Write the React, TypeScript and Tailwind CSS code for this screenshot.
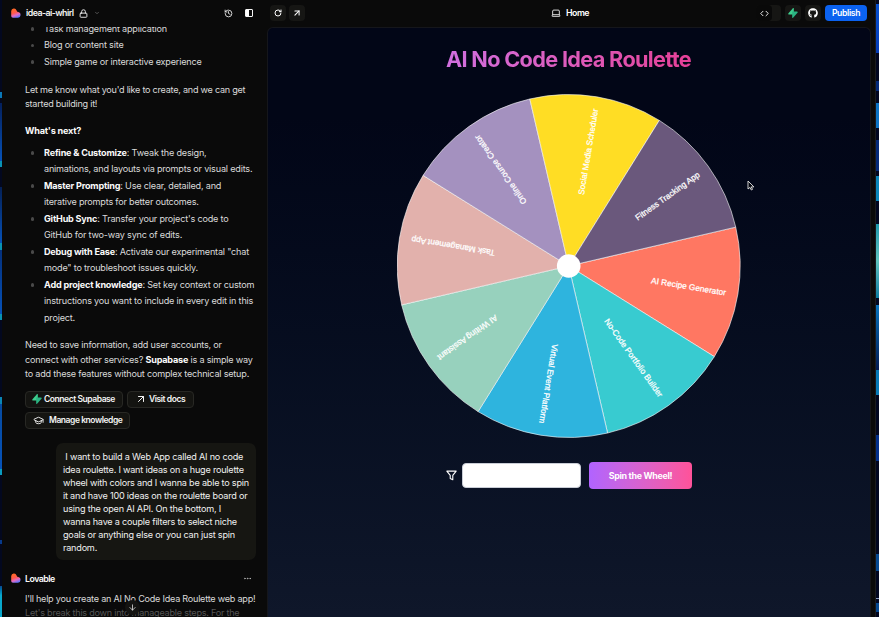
import { ReactNode } from "react";
import {
  ArrowDown,
  ArrowUpRight,
  ChevronDown,
  Code,
  Ellipsis,
  GraduationCap,
  History,
  Laptop,
  Lock,
  RotateCw,
} from "lucide-react";
import { FaGithub } from "react-icons/fa";

interface Slice {
  label: string;
  color: string;
}

interface ListItem {
  title?: string;
  lines: string[];
}

const slices: Slice[] = [
  { label: "AI Recipe Generator", color: "#ff7762" },
  { label: "No-Code Portfolio Builder", color: "#38cbd0" },
  { label: "Virtual Event Platform", color: "#2eb4de" },
  { label: "AI Writing Assistant", color: "#97d1bd" },
  { label: "Task Management App", color: "#e2b1ac" },
  { label: "Online Course Creator", color: "#a491bf" },
  { label: "Social Media Scheduler", color: "#ffdd24" },
  { label: "Fitness Tracking App", color: "#6a587c" },
];

const suggestions: ListItem[] = [
  { lines: ["Task management application"] },
  { lines: ["Blog or content site"] },
  { lines: ["Simple game or interactive experience"] },
];

const nextSteps: ListItem[] = [
  {
    title: "Refine & Customize",
    lines: [": Tweak the design,", "animations, and layouts via prompts or visual edits."],
  },
  {
    title: "Master Prompting",
    lines: [": Use clear, detailed, and", "iterative prompts for better outcomes."],
  },
  {
    title: "GitHub Sync",
    lines: [": Transfer your project's code to", "GitHub for two-way sync of edits."],
  },
  {
    title: "Debug with Ease",
    lines: [': Activate our experimental "chat', 'mode" to troubleshoot issues quickly.'],
  },
  {
    title: "Add project knowledge",
    lines: [
      ": Set key context or custom",
      "instructions you want to include in every edit in this",
      "project.",
    ],
  },
];

const prompt = [
  " I want to build a Web App called AI no code",
  "idea roulette. I want ideas on a huge roulette",
  "wheel with colors and I wanna be able to spin",
  "it and have 100 ideas on the roulette board or",
  "using the open AI API. On the bottom, I",
  "wanna have a couple filters to select niche",
  "goals or anything else or you can just spin",
  "random.",
];

const START = -13.1;
const STEP = 45;
const RADIUS = 171.5;

const point = (deg: number) => {
  const rad = (deg * Math.PI) / 180;
  return `${RADIUS * Math.cos(rad)} ${RADIUS * Math.sin(rad)}`;
};

const Wheel = () => (
  <svg className="h-[344px] w-[344px]" viewBox="-171.7 -172 344 344">
    {slices.map((s, i) => {
      const from = START + i * STEP;
      return (
        <path
          key={s.label}
          d={`M0 0L${point(from)}A${RADIUS} ${RADIUS} 0 0 1 ${point(from + STEP)}Z`}
          fill={s.color}
          stroke="#ffffff"
          strokeOpacity={0.6}
          strokeWidth={1}
        />
      );
    })}
    {slices.map((s, i) => (
      <text
        key={s.label}
        transform={`rotate(${START + (i + 0.5) * STEP})`}
        x={159.5}
        y={3.5}
        textAnchor="end"
        fill="#ffffff"
        className="font-['Liberation_Sans',sans-serif] text-[8.3px]"
        stroke="#ffffff"
        strokeWidth={0.25}
      >
        {s.label}
      </text>
    ))}
    <circle r={11.8} fill="#ffffff" />
  </svg>
);

const Logo = () => (
  <svg className="h-[10px] w-[10px]" viewBox="0 0 10 10">
    <defs>
      <linearGradient id="heart" x1="0.2" y1="0" x2="0.6" y2="1">
        <stop offset="0" stopColor="#ff6a1f" />
        <stop offset="0.45" stopColor="#ff5a4e" />
        <stop offset="0.7" stopColor="#e16bc4" />
        <stop offset="1" stopColor="#5b76ff" />
      </linearGradient>
    </defs>
    <path
      d="M0.2 3A2.8 2.8 0 0 1 5.6 2.4Q6 4 7.4 4.1A2.9 2.9 0 0 1 7 9.8H2Q0.2 9.6 0.2 8Z"
      fill="url(#heart)"
    />
  </svg>
);

const Bolt = ({ className }: { className: string }) => (
  <svg className={className} viewBox="0 0 12 12">
    <path d="M7 0.2V7.8H1.4Q-0.2 7.6 0.6 6.4L5.6 0.6Q6.6 -0.4 7 0.2Z" fill="#3ecf8e" />
    <path d="M5 11.8V4.2H10.6Q12.2 4.4 11.4 5.6L6.4 11.4Q5.4 12.4 5 11.8Z" fill="#2bb583" />
  </svg>
);

const Filter = ({ className }: { className: string }) => (
  <svg className={className} viewBox="0 0 12 12" fill="none">
    <path
      d="M0.9 1.2H11.1L7.4 5.9V10.6L4.6 9.2V5.9Z"
      stroke="#ffffff"
      strokeWidth={1.2}
      strokeLinejoin="round"
    />
  </svg>
);

const List = ({ items }: { items: ListItem[] }) => (
  <ul className="flex flex-col pl-[19px] leading-[16.5px] tracking-[-0.2px]">
    {items.map((item) => (
      <li key={item.lines[0]} className="relative">
        <span className="absolute -left-[13.5px] top-[6.5px] h-[3.5px] w-[3.5px] rounded-full bg-[#4a4a4a]" />
        {item.lines.map((line, i) => (
          <div key={line} className="whitespace-nowrap">
            {i === 0 && item.title && (
              <b className="font-bold text-[#fafafa]">{item.title}</b>
            )}
            {line}
          </div>
        ))}
      </li>
    ))}
  </ul>
);

const Chip = ({ children, className }: { children: ReactNode; className: string }) => (
  <button
    className={`flex h-[17px] items-center whitespace-nowrap rounded-[4px] border border-[#282824] bg-[#141411] text-[8.5px] font-semibold tracking-[-0.44px] text-[#f4f4f4] ${className}`}
  >
    {children}
  </button>
);

const Chat = () => (
  <aside className="relative flex w-[265px] shrink-0 flex-col overflow-hidden text-[9.1px] tracking-[-0.21px] text-[#dadada]">
    <header className="z-10 flex h-[27px] shrink-0 items-center bg-[#0a0a0a] pb-[1px] pl-[9px] text-[#f5f5f5]">
      <Logo />
      <span className="ml-[5px] w-[53px] whitespace-nowrap text-[8.8px] font-semibold tracking-[-0.55px]">
        idea-ai-whirl
      </span>
      <Lock className="h-[9px] w-[9px]" strokeWidth={2.4} />
      <ChevronDown className="ml-[6px] h-[6px] w-[6px] text-[#999]" />
      <History className="ml-[124px] h-[9px] w-[9px]" strokeWidth={2.2} />
      <span className="ml-[12px] h-[8px] w-[8px] rounded-[1px] border border-[#f5f5f5] bg-linear-to-r from-white from-45% to-transparent to-45%" />
    </header>
    <div className="-mt-[6.5px] flex flex-col pl-[23px]">
      <List items={suggestions} />
      <p className="mt-[12.5px] whitespace-nowrap leading-[14.6px] tracking-[-0.25px]">
        Let me know what you'd like to create, and we can get
        <br />
        started building it!
      </p>
      <h4 className="mt-[12px] text-[9.1px] font-bold leading-[14.6px] text-[#fafafa]">
        What's next?
      </h4>
      <div className="mt-[6.3px]">
        <List items={nextSteps} />
      </div>
      <p className="mt-[12px] whitespace-nowrap leading-[14.7px]">
        Need to save information, add user accounts, or
        <br />
        connect with other services?{" "}
        <b className="font-bold text-[#fafafa]">Supabase</b> is a simple way
        <br />
        to add these features without complex technical setup.
      </p>
      <div className="mt-[8.7px] flex flex-wrap gap-x-[4px] gap-y-[4px]">
        <Chip className="w-[98px] gap-[2px] pl-[6px]">
          <Bolt className="h-[10px] w-[10px]" />
          Connect Supabase
        </Chip>
        <Chip className="w-[67px] gap-[2px] pl-[7px]">
          <ArrowUpRight className="h-[12px] w-[12px]" />
          Visit docs
        </Chip>
        <Chip className="w-[105px] gap-[5px] pl-[7px]">
          <GraduationCap className="h-[11px] w-[11px]" />
          Manage knowledge
        </Chip>
      </div>
      <div className="ml-[31px] mt-[14.5px] h-[117px] w-[200px] whitespace-pre rounded-[7px] bg-[#161612] pl-[7px] pt-[7px] leading-[13px] text-[#f0f0f0]">
        {prompt.map((line) => (
          <div key={line}>{line}</div>
        ))}
      </div>
    </div>
    <div className="mt-[12px] flex h-[12px] items-center pl-[9px] text-[#fafafa]">
      <Logo />
      <span className="ml-[4px] text-[8.8px] font-semibold tracking-[-0.5px]">
        Lovable
      </span>
      <Ellipsis className="ml-auto mr-[15px] h-[9px] w-[9px] text-[#bbb]" />
    </div>
    <p className="mt-[7.5px] whitespace-nowrap pl-[23px] leading-[14.6px] tracking-[-0.24px]">
      I'll help you create an AI No Code Idea Roulette web app!
      <br />
      <span className="text-[#555]">
        Let's break this down into manageable steps. For the
      </span>
    </p>
    <button className="absolute bottom-[2px] left-[123px] flex h-[15px] w-[15px] items-center justify-center rounded-full bg-[#141412] text-[#eee]">
      <ArrowDown className="h-[9px] w-[9px]" />
    </button>
  </aside>
);

const IconButton = ({ children }: { children: ReactNode }) => (
  <button className="flex h-[16px] w-[16px] items-center justify-center rounded-[4px] bg-[#161614] text-white">
    {children}
  </button>
);

const Preview = () => (
  <main className="flex min-w-0 flex-1 flex-col">
    <header className="flex h-[27px] shrink-0 items-center pb-[1px] pl-[3px] text-white">
      <IconButton>
        <RotateCw className="h-[8px] w-[8px]" strokeWidth={3} />
      </IconButton>
      <span className="w-[3px]" />
      <IconButton>
        <ArrowUpRight className="h-[10px] w-[10px]" strokeWidth={2.5} />
      </IconButton>
      <Laptop className="ml-[246px] h-[10px] w-[10px]" />
      <span className="ml-[5px] w-[190px] text-[8.8px] font-semibold tracking-[-0.5px]">
        Home
      </span>
      <span className="flex h-[16px] w-[25px] rounded-[4px] bg-[#161614]">
        <span className="flex h-full w-[16px] items-center justify-center rounded-[4px] bg-[#090909]">
          <Code className="h-[9px] w-[9px]" strokeWidth={2.4} />
        </span>
      </span>
      <span className="w-[4px]" />
      <IconButton>
        <Bolt className="h-[10px] w-[10px]" />
      </IconButton>
      <span className="w-[4px]" />
      <IconButton>
        <FaGithub className="h-[10px] w-[10px]" />
      </IconButton>
      <button className="ml-[4px] h-[16px] w-[42px] rounded-[4px] bg-[#0b62f0] text-[8.6px] font-semibold tracking-[-0.35px]">
        Publish
      </button>
    </header>
    <section className="mr-[4px] flex flex-1 flex-col items-center rounded-t-[6px] border-x border-t border-[#15161b] bg-linear-to-b from-[#020617] from-15% to-[#0f172a]">
      <h1 className="mt-[17px] whitespace-nowrap bg-linear-to-r from-[#d16fe0] to-[#e63f97] bg-clip-text pr-[1px] text-[21.7px] font-bold leading-[28px] tracking-[-0.68px] text-transparent">
        AI No Code Idea Roulette
      </h1>
      <div className="mt-[21px]">
        <Wheel />
      </div>
      <div className="mt-[24px] flex items-center">
        <Filter className="mr-[5px] h-[11px] w-[11px]" />
        <div className="h-[25px] w-[119px] rounded-[4px] border border-[#c9cdd6] bg-white" />
        <button className="ml-[8px] h-[27px] w-[103px] rounded-[4px] bg-linear-to-r from-[#b163ff] to-[#ff5299] text-[8.9px] font-bold tracking-[-0.33px] text-white">
          Spin the Wheel!
        </button>
      </div>
    </section>
  </main>
);

const App = () => (
  <div className="relative flex h-[617px] w-[879px] overflow-hidden bg-[#0a0a0a] font-['Inter',sans-serif]">
    <div className="flex w-[2px] shrink-0 flex-col bg-[#03081f]">
      <div className="mt-[92px] h-[6px] bg-[#0a78b8]" />
      <div className="mt-[5px] h-[58px] bg-linear-to-b from-[#04205c] to-[#0652b8]" />
      <div className="h-[6px] bg-[#0992b4]" />
      <div className="mt-[20px] h-[56px] bg-linear-to-b from-[#042056] to-[#0652b8]" />
      <div className="h-[7px] bg-[#0992b4]" />
      <div className="h-[64px] bg-linear-to-b from-[#04307c] to-[#0652b8]" />
      <div className="h-[6px] bg-[#0992b4]" />
      <div className="mt-[77px] h-[7px] bg-[#0a86b4]" />
      <div className="h-[65px] bg-linear-to-b from-[#064aa0] to-[#0652b8]" />
      <div className="h-[6px] bg-[#0a9cc0]" />
      <div className="mt-[65px] h-[4px] bg-[#073a8c]" />
      <div className="mt-[42px] flex-1 bg-linear-to-b from-[#064a90] to-[#09a8cc] to-30%" />
    </div>
    <Chat />
    <Preview />
    <div className="w-[1px] shrink-0 bg-[#1c1c1c]" />
    <div className="flex w-[3px] shrink-0 flex-col bg-[#020720]">
      <div className="mt-[4px] h-[49px] bg-linear-to-b from-[#0750d0] to-[#063cb4]" />
      <div className="mt-[28px] h-[10px] bg-[#052a78]" />
      <div className="mt-[12px] h-[25px] bg-[#0d74c4]" />
      <div className="mt-[12px] h-[31px] bg-[#052a78]" />
      <div className="mt-[5px] h-[25px] bg-[#0b86b8]" />
      <div className="mt-[23px] h-[74px] bg-linear-to-b from-[#1d9aac] via-[#5fc4bb] to-[#087da0]" />
      <div className="mt-[7px] h-[65px] bg-linear-to-b from-[#0a75bd] to-[#041b52]" />
      <div className="h-[25px] bg-[#087ab5]" />
      <div className="mt-[40px] h-[26px] bg-[#04308a]" />
      <div className="mt-[93px] h-[17px] bg-[#07498f]" />
      <div className="mt-[27px] h-[1px] bg-[#8a9ac0]" />
      <div className="mt-[4px] h-[9px] bg-[#07498f]" />
    </div>
    <svg
      className="absolute left-[747px] top-[180px] h-[11px] w-[8px]"
      viewBox="0 0 8 11"
    >
      <path
        d="M1 1V9L3 7.4L4.3 10L5.5 9.4L4.3 6.9H6.9Z"
        fill="#05070f"
        stroke="#e5e5e5"
        strokeWidth={0.9}
      />
    </svg>
  </div>
);

export default App;
